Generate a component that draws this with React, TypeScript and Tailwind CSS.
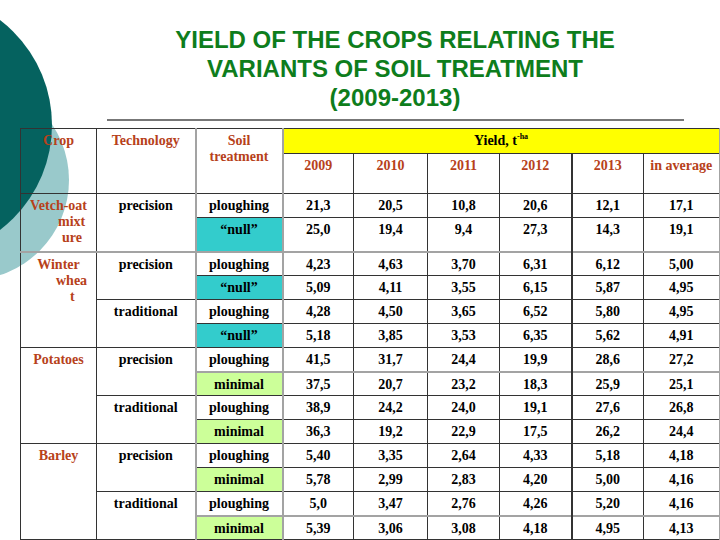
import React from "react";

type Line = { t: string; cls: string };

type Row = {
  crop?: { lines: Line[]; span: number };
  tech?: { label: string; span: number };
  soil: string;
  soilCls: string;
  vals: string[];
  rowCls: string;
  topCls: string;
};

const white = "";
const cyan = "bg-[#33cccc]";
const green = "bg-[#ccff99]";
const dark = "border-t border-t-[#333]";
const gray = "border-t-2 border-t-[#a3a3a3]";

const rows: Row[] = [
  {
    crop: {
      span: 2,
      lines: [
        { t: "Vetch-oat", cls: "text-center" },
        { t: "mixt", cls: "text-left pl-[37px]" },
        { t: "ure", cls: "text-left pl-[41px]" },
      ],
    },
    tech: { label: "precision", span: 2 },
    soil: "ploughing",
    soilCls: white,
    vals: ["21,3", "20,5", "10,8", "20,6", "12,1", "17,1"],
    rowCls: "h-[24px]",
    topCls: dark,
  },
  {
    soil: "\u201cnull\u201d",
    soilCls: cyan,
    vals: ["25,0", "19,4", "9,4", "27,3", "14,3", "19,1"],
    rowCls: "h-[34px]",
    topCls: dark,
  },
  {
    crop: {
      span: 4,
      lines: [
        { t: "Winter", cls: "text-center" },
        { t: "whea", cls: "text-left pl-[35px]" },
        { t: "t", cls: "text-left pl-[49px]" },
      ],
    },
    tech: { label: "precision", span: 2 },
    soil: "ploughing",
    soilCls: white,
    vals: ["4,23", "4,63", "3,70", "6,31", "6,12", "5,00"],
    rowCls: "h-[24px]",
    topCls: gray,
  },
  {
    soil: "\u201cnull\u201d",
    soilCls: cyan,
    vals: ["5,09", "4,11", "3,55", "6,15", "5,87", "4,95"],
    rowCls: "h-[24px]",
    topCls: dark,
  },
  {
    tech: { label: "traditional", span: 2 },
    soil: "ploughing",
    soilCls: white,
    vals: ["4,28", "4,50", "3,65", "6,52", "5,80", "4,95"],
    rowCls: "h-[24px]",
    topCls: dark,
  },
  {
    soil: "\u201cnull\u201d",
    soilCls: cyan,
    vals: ["5,18", "3,85", "3,53", "6,35", "5,62", "4,91"],
    rowCls: "h-[24px]",
    topCls: dark,
  },
  {
    crop: { span: 4, lines: [{ t: "Potatoes", cls: "text-center" }] },
    tech: { label: "precision", span: 2 },
    soil: "ploughing",
    soilCls: white,
    vals: ["41,5", "31,7", "24,4", "19,9", "28,6", "27,2"],
    rowCls: "h-[24px]",
    topCls: dark,
  },
  {
    soil: "minimal",
    soilCls: green,
    vals: ["37,5", "20,7", "23,2", "18,3", "25,9", "25,1"],
    rowCls: "h-[24px]",
    topCls: gray,
  },
  {
    tech: { label: "traditional", span: 2 },
    soil: "ploughing",
    soilCls: white,
    vals: ["38,9", "24,2", "24,0", "19,1", "27,6", "26,8"],
    rowCls: "h-[24px]",
    topCls: dark,
  },
  {
    soil: "minimal",
    soilCls: green,
    vals: ["36,3", "19,2", "22,9", "17,5", "26,2", "24,4"],
    rowCls: "h-[24px]",
    topCls: dark,
  },
  {
    crop: { span: 4, lines: [{ t: "Barley", cls: "text-center" }] },
    tech: { label: "precision", span: 2 },
    soil: "ploughing",
    soilCls: white,
    vals: ["5,40", "3,35", "2,64", "4,33", "5,18", "4,18"],
    rowCls: "h-[24px]",
    topCls: dark,
  },
  {
    soil: "minimal",
    soilCls: green,
    vals: ["5,78", "2,99", "2,83", "4,20", "5,00", "4,16"],
    rowCls: "h-[24px]",
    topCls: dark,
  },
  {
    tech: { label: "traditional", span: 2 },
    soil: "ploughing",
    soilCls: white,
    vals: ["5,0", "3,47", "2,76", "4,26", "5,20", "4,16"],
    rowCls: "h-[24px]",
    topCls: dark,
  },
  {
    soil: "minimal",
    soilCls: green,
    vals: ["5,39", "3,06", "3,08", "4,18", "4,95", "4,13"],
    rowCls: "h-[24px]",
    topCls: gray,
  },
];

const cell = "border border-[#333] align-top p-0 pt-[4px] text-center font-bold text-[14px] leading-[16px]";
const valBorder = [
  "border-l-2 border-l-[#a3a3a3]",
  "",
  "",
  "",
  "border-l-2 border-l-[#333]",
  "border-r-2 border-r-[#a3a3a3]",
];

const App = () => {
  return (
    <div className="relative w-[720px] h-[540px] overflow-hidden bg-white font-['Liberation_Serif',serif]">
      {/* backdrop circles */}
      <div className="absolute left-[-131px] top-[80px] w-[200px] h-[200px] rounded-full bg-[#99c9cb]" />
      <div className="absolute left-[-212px] top-[-7px] w-[264px] h-[264px] rounded-full bg-[#05625f]" />

      <div className="relative">
        <h1 className="pt-[25px] pl-[70px] text-center font-['Liberation_Sans',Arial,sans-serif] font-bold text-[24px] leading-[29px] text-[#0e7d1c]">
          YIELD OF THE CROPS RELATING THE
          <br />
          VARIANTS OF SOIL TREATMENT
          <br />
          (2009-2013)
        </h1>

        <div className="mt-[7px] ml-[107px] w-[577px] h-[2px] bg-[#777]" />

        <table className="mt-[7px] ml-[20px] w-[699px] table-fixed border-collapse text-black">
          <colgroup>
            <col className="w-[76px]" />
            <col className="w-[99px]" />
            <col className="w-[87px]" />
            <col className="w-[71px]" />
            <col className="w-[74px]" />
            <col className="w-[72px]" />
            <col className="w-[72px]" />
            <col className="w-[72px]" />
            <col className="w-[76px]" />
          </colgroup>
          <thead>
            <tr className="h-[25px]">
              <th rowSpan={2} className={`${cell} text-[#b7411a]`}>Crop</th>
              <th rowSpan={2} className={`${cell} text-[#b7411a]`}>Technology</th>
              <th rowSpan={2} className={`${cell} text-[#b7411a] border-x-2 border-x-[#a3a3a3]`}>
                Soil
                <br />
                treatment
              </th>
              <th colSpan={6} className={`${cell} bg-[#ffff00] border-r-2 border-r-[#a3a3a3]`}>
                Yield, t<span className="relative top-[-6px] text-[8px] leading-none align-baseline">-ha</span>
              </th>
            </tr>
            <tr className="h-[40px]">
              {["2009", "2010", "2011", "2012", "2013", "in average"].map((y, i) => (
                <th key={y} className={`${cell} text-[#b7411a] ${valBorder[i]}`}>
                  {y}
                </th>
              ))}
            </tr>
          </thead>
          <tbody>
            {rows.map((r, ri) => (
              <tr key={ri} className={r.rowCls}>
                {r.crop && (
                  <td rowSpan={r.crop.span} className={`${cell} ${r.topCls} text-[#b7411a]`}>
                    {r.crop.lines.map((l) => (
                      <div key={l.t} className={l.cls}>
                        {l.t}
                      </div>
                    ))}
                  </td>
                )}
                {r.tech && (
                  <td rowSpan={r.tech.span} className={`${cell} ${r.topCls}`}>
                    {r.tech.label}
                  </td>
                )}
                <td className={`${cell} ${r.topCls} ${r.soilCls} border-x-2 border-x-[#a3a3a3]`}>{r.soil}</td>
                {r.vals.map((v, i) => (
                  <td key={i} className={`${cell} ${r.topCls} ${valBorder[i]}`}>
                    {v}
                  </td>
                ))}
              </tr>
            ))}
          </tbody>
        </table>
      </div>
    </div>
  );
};

export default App;
